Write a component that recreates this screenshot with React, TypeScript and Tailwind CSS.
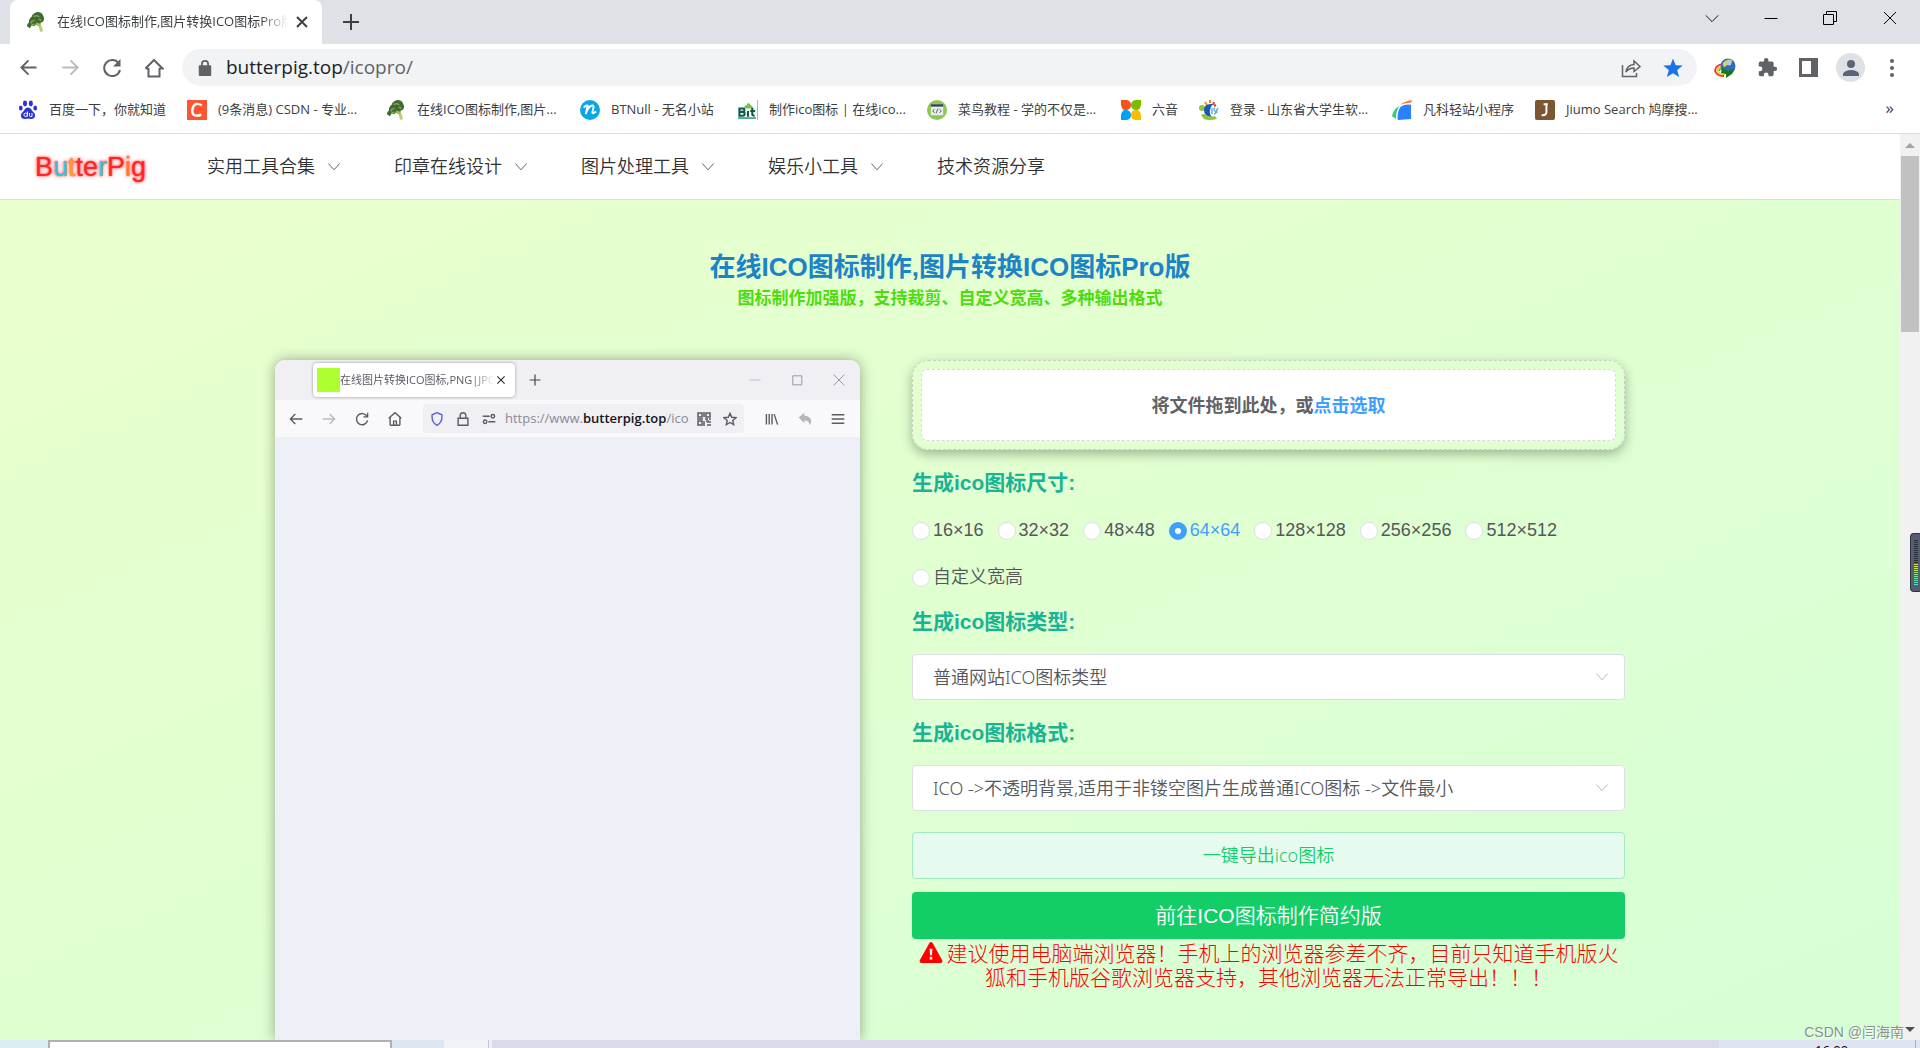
import type { ReactNode } from "react";
import clsx from "clsx";

const Broccoli = () => (
  <svg viewBox="0 0 21 21" className="size-5 shrink-0">
    <path d="M13 9l3 5 2 6-3 1-2-6-4-3z" fill="#b9cf7a" />
    <path d="M8 13l5-3 3 2-2 3-3-1z" fill="#9dbb5c" />
    <path d="M1 15q0-3 2-4 0-4 3-6 1-4 6-5 5 0 6 4 2 3 0 6l-4 2-3-1-2 4-3-1-2 3z" fill="#3f6b2c" />
    <path d="M5 12q1-3 4-3m-1-4q3-2 6 0m-8 9q1-1 3-1m4-5q2-1 3 1" stroke="#7da552" strokeWidth="1.6" fill="none" />
  </svg>
);

const Baidu = () => (
  <svg viewBox="0 0 20 20" className="size-5 shrink-0" fill="#2a32d8">
    <ellipse cx="7" cy="3.4" rx="2" ry="2.8" />
    <ellipse cx="12.8" cy="3.4" rx="2" ry="2.8" />
    <ellipse cx="2.8" cy="8" rx="1.9" ry="2.5" />
    <ellipse cx="17.2" cy="8" rx="1.9" ry="2.5" />
    <path d="M10 7.5c3 0 3.5 3 5.5 4.7 3 2.6 1.5 7-2 6.8-2.3-.3-4.7-.3-7 0-3.5.2-5-4.2-2-6.800C6.5 10.5 7 7.5 10 7.5z" />
    <circle cx="7.6" cy="14.8" r="1.700" fill="none" stroke="#fff" />
    <path d="M9.5 11.5v5M11.5 13v2.5q0 1 1 1h1.5V13" fill="none" stroke="#fff" />
  </svg>
);

const Csdn = () => (
  <svg viewBox="0 0 21 21" className="size-5 shrink-0">
    <path fill="#fc5531" d="M0 0h21v21H0z" />
    <path d="M15.5 5.5q-6.5-3.5-9 1.5-2 4.5 0 8 2.5 2.5 8.5.5" fill="none" stroke="#fff" strokeWidth="2.6" />
  </svg>
);

const BtNull = () => (
  <svg viewBox="0 0 21 21" className="size-5 shrink-0">
    <circle cx="10.5" cy="10.5" r="10.5" fill="#08a5e9" />
    <path d="M4 8q2-3 4-2-1 5-2 9 2-7 6-9 3-1 2 3l-1 4q0 2 4-1" fill="none" stroke="#fff" strokeWidth="2" />
  </svg>
);

const Bit = () => (
  <svg viewBox="0 0 21 21" className="size-5 shrink-0">
    <path d="M5 9l6-6 6 6z" fill="#7cc142" />
    <path d="M20.5 0v21" stroke="#8bc98b" />
    <path d="M1.5 9v7.5H5q2 0 2-2t-2-2q1.700 0 1.700-1.700T5 9zM1.5 12.5H5M10.5 11.5v6M15 8.5V15q0 1.5 2.5 1.5M12.800 11.5H18" stroke="#0b5c4c" strokeWidth="2.2" fill="none" />
    <path d="M0 18h19v2H0z" fill="#5aa394" />
  </svg>
);

const Runoob = () => (
  <svg viewBox="0 0 21 21" className="size-5 shrink-0">
    <circle cx="10.5" cy="10.5" r="10.5" fill="#8cc751" />
    <path d="M4 5h13v11H4z" fill="#e9eeee" />
    <path d="M4 4.5h13V7H4z" fill="#34495e" />
    <path d="M8 9.5l-2 2 2 2m5-4l2 2-2 2m-1.500-4.5l-2 5" stroke="#555" fill="none" />
  </svg>
);

const SixTone = () => (
  <svg viewBox="0 0 20 20" className="size-5 shrink-0">
    <path d="M0 0h6q4 1 4 5t-4 5H3Q0 8 0 5z" fill="#f65314" />
    <path d="M20 0h-6q-4 1-4 5t4 5h3q3-2 3-5z" fill="#7cbb00" />
    <path d="M0 20h6q4-1 4-5t-4-5H3Q0 12 0 15z" fill="#00a1f1" />
    <path d="M20 20h-6q-4-1-4-5t4-5h3q3 2 3 5z" fill="#ffbb00" />
  </svg>
);

const Shandong = () => (
  <svg viewBox="0 0 20 20" className="size-5 shrink-0">
    <path d="M6 2l2 3M11 0v3" stroke="#f08a24" strokeWidth="2" />
    <path d="M15 2l-1 3m3 0l-2 1" stroke="#e33" strokeWidth="2" />
    <circle cx="3" cy="8" r="3" fill="#8cc63f" />
    <path d="M14 4Q5 3 5 10t8 7q-3-3-2-7t3-6z" fill="#1258b5" />
    <path d="M13 8v6m3-6q-2 1 0 3t-1 3m4-6q-2 2-1 5" stroke="#5fb0e6" strokeWidth="1.5" fill="none" />
    <path d="M2 15q3-2 5 0 5 3 9 1l2 3q-8 2-13 0z" fill="#8cc63f" />
  </svg>
);

const Fanke = () => (
  <svg viewBox="0 0 21 21" className="size-5 shrink-0">
    <path d="M9 5Q13 1 21 0l-1 3q-6 0-11 2z" fill="#ff7a3d" />
    <path d="M8 6Q4 12 4 20L0 17Q1 10 8 6z" fill="#2fd07c" />
    <path d="M9 7q5-3 11-2v15l-14 1Q5 13 9 7z" fill="#2b80ff" />
  </svg>
);

const Jiumo = () => (
  <svg viewBox="0 0 21 21" className="size-5 shrink-0">
    <rect width="21" height="21" rx="2" fill="#7c5633" />
    <path d="M9 4.5h4.500M12 4.5v8q0 4-5 3.5" fill="none" stroke="#fff" strokeWidth="2" />
  </svg>
);

const bookmarks: { icon: ReactNode; label: string; width: string }[] = [
  { icon: <Baidu />, label: "百度一下，你就知道", width: "w-[169px]" },
  { icon: <Csdn />, label: "(9条消息) CSDN - 专业...", width: "w-[199px]" },
  { icon: <Broccoli />, label: "在线ICO图标制作,图片...", width: "w-[194px]" },
  { icon: <BtNull />, label: "BTNull - 无名小站", width: "w-[158px]" },
  { icon: <Bit />, label: "制作ico图标 | 在线ico...", width: "w-[189px]" },
  { icon: <Runoob />, label: "菜鸟教程 - 学的不仅是...", width: "w-[194px]" },
  { icon: <SixTone />, label: "六音", width: "w-[78px]" },
  { icon: <Shandong />, label: "登录 - 山东省大学生软...", width: "w-[193px]" },
  { icon: <Fanke />, label: "凡科轻站小程序", width: "w-[143px]" },
  { icon: <Jiumo />, label: "Jiumo Search 鸠摩搜...", width: "w-[180px]" },
];

const navItems = [
  { label: "实用工具合集", menu: true },
  { label: "印章在线设计", menu: true },
  { label: "图片处理工具", menu: true },
  { label: "娱乐小工具", menu: true },
  { label: "技术资源分享", menu: false },
];

const sizes = ["16×16", "32×32", "48×48", "64×64", "128×128", "256×256", "512×512", "自定义宽高"];

// stroke icon on a 20 unit grid
function Line({ d, className, width = 2 }: { d: string; className?: string; width?: number }) {
  return (
    <svg viewBox="0 0 20 20" className={clsx("shrink-0", className)} fill="none" stroke="currentColor" strokeWidth={width}>
      <path d={d} />
    </svg>
  );
}

function IconButton({ label, className, children }: { label: string; className?: string; children: ReactNode }) {
  return (
    <button type="button" aria-label={label} className={clsx("flex shrink-0 items-center justify-center", className)}>
      {children}
    </button>
  );
}

function TabStrip() {
  return (
    <div className="flex h-11 shrink-0 bg-[#dee1e6] pl-[10px]">
      <div className="flex w-[312px] items-center rounded-t-lg bg-white pr-[10px] pl-4">
        <Broccoli />
        <span className="ml-[11px] flex-1 overflow-hidden whitespace-nowrap text-[13px] [mask-image:linear-gradient(90deg,#000_88%,transparent)]">
          在线ICO图标制作,图片转换ICO图标Pro版
        </span>
        <IconButton label="关闭标签页" className="ml-1 size-5">
          <Line d="M5 5l10 10M15 5L5 15" className="size-5 text-[#3c4043]" />
        </IconButton>
      </div>
      <IconButton label="新标签页" className="ml-[15px] w-7">
        <Line d="M10 2v16M2 10h16" className="size-5 text-[#3c4043]" />
      </IconButton>
      <div className="ml-auto flex h-9 text-black">
        <IconButton label="搜索标签页" className="w-[59px]">
          <Line d="M3 7l7 7 7-7" width={1} className="size-[18px]" />
        </IconButton>
        <IconButton label="最小化" className="w-[59px]">
          <Line d="M3.5 10.5h13" width={1} className="size-5" />
        </IconButton>
        <IconButton label="还原" className="w-[59px]">
          <Line d="M3.5 6.5h10v10h-10zM6.5 6.5v-3h10v10h-3" width={1} className="size-5" />
        </IconButton>
        <IconButton label="关闭" className="w-[61px]">
          <Line d="M4 4l12 12M16 4L4 16" width={1} className="size-5" />
        </IconButton>
      </div>
    </div>
  );
}

function Toolbar() {
  return (
    <div className="flex h-[47px] shrink-0 items-center bg-white pl-[7px] text-[#5f6368]">
      <IconButton label="后退" className="w-[42px]">
        <Line d="M18.5 10H2.500M10 2.5L2.5 10l7.5 7.5" className="size-[19px]" />
      </IconButton>
      <IconButton label="前进" className="w-[42px] text-[#babcbe]">
        <Line d="M1.5 10h16M10 2.5l7.5 7.5-7.5 7.5" className="size-[19px]" />
      </IconButton>
      <IconButton label="重新加载" className="w-[42px]">
        <svg viewBox="0 0 20 20" className="size-5">
          <path d="M16.800 5.500A8 8 0 1 0 18 12" fill="none" stroke="currentColor" strokeWidth="2" />
          <path d="M18.5 1v7.500H11z" fill="currentColor" />
        </svg>
      </IconButton>
      <IconButton label="主页" className="w-[41px]">
        <Line d="M4.5 10v8.500h11V10M1.5 10.5L10 2l8.500 8.500h-3M4.5 10.500h-3" className="size-5" />
      </IconButton>
      <div className="ml-2 flex h-[37px] flex-1 items-center rounded-full bg-[#f1f3f4] pr-[3px] pl-4">
        <svg viewBox="0 0 14 18" className="h-[16px] w-3.5" fill="currentColor">
          <path d="M1 6h12q1 0 1 1v10q0 1-1 1H1q-1 0-1-1V7q0-1 1-1z" />
          <path d="M3.500 7V4.500a3.500 3.500 0 0 1 7 0V7" fill="none" stroke="currentColor" strokeWidth="2" />
        </svg>
        <div className="ml-[14px] flex-1 text-[19px] text-[#202124]">
          butterpig.top<span className="text-[#5f6368]">/icopro/</span>
        </div>
        <IconButton label="分享" className="w-[42px]">
          <Line d="M1.5 7v11.500h14V15M5 14q1-7 8-7.500V3l6 5.500-6 5v-3.500q-5 0-8 4z" width={1.5} className="size-5" />
        </IconButton>
        <IconButton label="收藏" className="w-[42px] text-[#1a73e8]">
          <svg viewBox="0 0 20 20" className="size-5" fill="currentColor">
            <path d="M10 .5l2.600 6.700 7.200.4-5.600 4.500 1.900 7L10 15.200l-6.100 3.900 1.900-7L.2 7.600l7.200-.4z" />
          </svg>
        </IconButton>
      </div>
      <div className="ml-[7px] flex items-center pr-2">
        <IconButton label="IDM" className="w-[42px]">
          <svg viewBox="0 0 22 20" className="size-[22px]">
            <path d="M8 6Q1 8 1 13q2 5 9 5" fill="none" stroke="#e8322a" strokeWidth="1.800" />
            <path d="M8 8Q3 10 3 13q3 4 8 3" fill="none" stroke="#f5d21f" strokeWidth="1.800" />
            <path d="M9 10q-4 1-4 3" fill="none" stroke="#4bbf3a" strokeWidth="1.800" />
            <circle cx="14" cy="8" r="7.500" fill="#3568b8" />
            <path d="M9 5q4-5 9-3 0 4-4 4l-3 3q-3-1-2-4z" fill="#d9d257" />
            <circle cx="15" cy="5" r="2.500" fill="#a9cdf0" />
            <path d="M8 10l6 3 7-2-3 5-6 4v-4l-5-1z" fill="#117a1b" />
          </svg>
        </IconButton>
        <IconButton label="扩展程序" className="w-[42px]">
          <svg viewBox="0 0 24 24" className="size-[21px]" fill="currentColor">
            <path d="M20.500 11H19V7a2 2 0 0 0-2-2h-4V3.500a2.500 2.500 0 0 0-5 0V5H4a2 2 0 0 0-2 2v3.800h1.500a2.700 2.700 0 0 1 0 5.400H2V20a2 2 0 0 0 2 2h3.800v-1.500a2.700 2.700 0 0 1 5.400 0V22H17a2 2 0 0 0 2-2v-4h1.500a2.500 2.500 0 0 0 0-5z" />
          </svg>
        </IconButton>
        <IconButton label="侧边栏" className="w-[41px]">
          <svg viewBox="0 0 19 19" className="size-[19px]">
            <path d="M0 0h19v19H0z" fill="currentColor" />
            <path d="M3 3h9v13H3z" fill="#fff" />
          </svg>
        </IconButton>
        <IconButton label="用户" className="mx-[7px] size-[29px] rounded-full bg-[#dee1e6] text-[#5c6577]">
          <svg viewBox="0 0 16 16" className="size-4" fill="currentColor">
            <circle cx="8" cy="4" r="4" />
            <path d="M0 16v-2.500Q2 10 8 10t8 3.500V16z" />
          </svg>
        </IconButton>
        <IconButton label="菜单" className="w-[40px]">
          <svg viewBox="0 0 4 18" className="h-[18px] w-1" fill="currentColor">
            <circle cx="2" cy="2" r="2" />
            <circle cx="2" cy="9" r="2" />
            <circle cx="2" cy="16" r="2" />
          </svg>
        </IconButton>
      </div>
    </div>
  );
}

function BookmarkBar() {
  return (
    <div className="flex h-[43px] shrink-0 items-center border-b border-[#dadce0] bg-white pr-[26px] pb-1 pl-[18px] text-[13px] text-[#3c4043]">
      {bookmarks.map((b) => (
        <a key={b.label} href="#" className={clsx("flex shrink-0 items-center gap-[11px] whitespace-nowrap", b.width)}>
          {b.icon}
          {b.label}
        </a>
      ))}
      <button type="button" className="ml-auto pb-1 text-[17px]" aria-label="更多书签">
        »
      </button>
    </div>
  );
}

function SiteHeader() {
  return (
    <header className="flex h-[66px] items-center border-b border-[#dcdfe6] bg-white pl-[35px] text-[18px] font-[350] text-[#303133]">
      <a
        href="#"
        className="w-[172px] font-['Liberation_Sans'] text-[27px] leading-8 font-normal text-[#ff2626] [text-shadow:0_0_2px_#ff3b3b,0_0_4px_#ff8080]"
      >
        B<span className="text-[#2fc4e0]">u</span>
        <span className="text-[#ff9b2e]">t</span>te<span className="text-[#2fc4e0]">r</span>P
        <span className="text-[#ff7a2e]">i</span>g
      </a>
      <nav className="flex gap-[53px]">
        {navItems.map((item) => (
          <a key={item.label} href="#" className="flex items-center gap-3">
            {item.label}
            {item.menu && <Line d="M2 5l8 9 8-9" width={1.4} className="size-3.5 text-[#606266]" />}
          </a>
        ))}
      </nav>
    </header>
  );
}

function PreviewWindow() {
  return (
    <div className="flex w-[585px] shrink-0 flex-col overflow-hidden rounded-t-[10px] bg-[#edf0f6] shadow-[0_0_14px_rgba(0,0,0,0.35)]">
      <div className="flex h-10 shrink-0 items-center bg-[#f0eff4] pr-[15px] pl-[38px] text-[#5b5b66]">
        <div className="flex h-[34px] w-[202px] items-center rounded bg-white pr-2 pl-1 shadow-[0_0_3px_rgba(0,0,0,0.4)]">
          <span className="h-6 w-[23px] shrink-0 bg-[#adff2f]" />
          <span className="flex-1 overflow-hidden whitespace-nowrap text-[11px] [mask-image:linear-gradient(90deg,#000_85%,transparent)]">
            在线图片转换ICO图标,PNG|JPG转ICO
          </span>
          <Line d="M4 4l12 12M16 4L4 16" className="size-3 text-[#333]" />
        </div>
        <Line d="M10 1v18M1 10h18" width={2} className="ml-[14px] size-3 text-[#444]" />
        <div className="ml-auto flex gap-[30px] text-[#8f8f9d]">
          <Line d="M1 10h18" width={1.5} className="size-3 opacity-60" />
          <Line d="M3 3h15v15H3z" width={1.5} className="size-3" />
          <Line d="M1 1l18 18M19 1L1 19" width={1.5} className="size-3" />
        </div>
      </div>
      <div className="flex h-[37px] shrink-0 items-center bg-[#f9f9fb] pr-[15px] pl-[14px] text-[#5b5b66]">
        <div className="flex w-[134px] shrink-0 gap-[19px]">
          <Line d="M19 10H2M9 3l-7 7 7 7" className="size-3.5" />
          <Line d="M1 10h17M11 3l7 7-7 7" className="size-3.5 opacity-40" />
          <Line d="M17 6a8 8 0 1 0 1 6M18 1v6h-6" className="size-3.5" />
          <Line d="M3 8v10q0 1 1 1h12q1 0 1-1V8M1 9l9-8 9 8M8 19v-6h4v6" className="size-3.5" />
        </div>
        <div className="flex h-[29px] min-w-0 flex-1 items-center rounded bg-[#f0eff4] px-[7px]">
          <Line d="M10 1l7 3q1 11-7 15-8-4-7-15z" className="size-3.5 text-[#5a5fd8]" />
          <Line d="M3 9h14v10H3zM6 9V5a4 4 0 0 1 8 0v4" className="ml-3 size-3.5" />
          <Line d="M1 6h10m-2 8h10M13 6a2 2 0 1 0 5 0 2 2 0 1 0-5 0M2 14a2 2 0 1 0 5 0 2 2 0 1 0-5 0" className="ml-3 size-3.5" />
          <span className="ml-[9px] flex-1 whitespace-nowrap text-[13px] text-[#8a8a93]">
            https://www.<span className="font-semibold text-[#15141a]">butterpig.top</span>/ico
          </span>
          <svg viewBox="0 0 14 14" className="size-3.5 shrink-0" fill="none" stroke="currentColor" strokeWidth="1.5">
            <path d="M1 1h4v4H1zM9 1h4v4H9zM1 9h4v4H1zM7 0v5M0 7h6M8 7h3M12 7h2M7 9v5M9 9h2v2M13 9v2M10 13h4" />
          </svg>
          <Line d="M10 2l2.500 5.500 6 .6-4.500 4 1.300 6L10 15l-5.300 3.100 1.300-6-4.500-4 6-.6z" className="ml-3 size-3.5" />
        </div>
        <div className="ml-[21px] flex gap-[19px]">
          <Line d="M2 3v15M6 3v15M10 3v15M13 3l5 15" className="size-3.5" />
          <svg viewBox="0 0 20 20" className="size-3.5" fill="#b5b5bc">
            <path d="M1 8l8-7v4q10 1 10 9-1 4-3 5 1-7-7-7v4z" />
          </svg>
          <Line d="M1 4h18M1 10h18M1 16h18" className="size-3.5" />
        </div>
      </div>
    </div>
  );
}

function SelectBox({ id, value }: { id: string; value: string }) {
  return (
    <div className="relative">
      <select
        id={id}
        className="h-[46px] w-full appearance-none rounded border border-[#dcdfe6] bg-white px-5 font-['Noto_Sans','Noto_Sans_CJK_SC',sans-serif] text-[18px] font-[350] text-[#55575b]"
      >
        <option>{value}</option>
      </select>
      <Line d="M2 5l8 9 8-9" width={1.2} className="pointer-events-none absolute top-4 right-4 size-3.5 text-[#a8abb2]" />
    </div>
  );
}

function OptionsForm() {
  const label = "font-['Liberation_Sans','Noto_Sans_CJK_SC',sans-serif] text-[21px] leading-[26px] font-bold text-[#1ab394]";
  return (
    <form className="flex w-[713px] shrink-0 flex-col">
      <div className="rounded-2xl border border-dashed border-[#c8cdc8] p-2 shadow-[0_4px_12px_rgba(0,0,0,0.3)]">
        <label className="flex h-[72px] cursor-pointer items-center justify-center rounded-md border border-dashed border-[#d9d9d9] bg-white text-[18px] font-bold text-[#606266]">
          将文件拖到此处，或<span className="text-[#409eff]">点击选取</span>
          <input type="file" className="sr-only" />
        </label>
      </div>
      <fieldset className="mt-5">
        <legend className={label}>生成ico图标尺寸:</legend>
        <div className="mt-[11px] flex flex-wrap gap-x-[14px] font-['Liberation_Sans','Noto_Sans_CJK_SC',sans-serif] text-[18px] text-[#55575b]">
          {sizes.map((s) => (
            <label key={s} className="flex h-[47px] items-center gap-[3px] font-[350] has-checked:text-[#409eff]">
              <input
                type="radio"
                name="size"
                defaultChecked={s === "64×64"}
                className="size-[18px] appearance-none rounded-full border border-[#dcdfe6] bg-white checked:border-[6px] checked:border-[#409eff]"
              />
              {s}
            </label>
          ))}
        </div>
      </fieldset>
      <label htmlFor="type" className={clsx(label, "mt-2 mb-[19px]")}>
        生成ico图标类型:
      </label>
      <SelectBox id="type" value="普通网站ICO图标类型" />
      <label htmlFor="format" className={clsx(label, "mt-5 mb-[19px]")}>
        生成ico图标格式:
      </label>
      <SelectBox id="format" value="ICO ->不透明背景,适用于非镂空图片生成普通ICO图标 ->文件最小" />
      <button
        type="button"
        className="mt-[21px] h-[47px] rounded border border-[#a1ebc2] bg-[#e7faf0] font-['Noto_Sans','Noto_Sans_CJK_SC',sans-serif] text-[18px] font-[350] text-[#13ce66]"
      >
        一键导出ico图标
      </button>
      <button
        type="button"
        className="mt-[13px] h-[47px] rounded bg-[#13ce66] font-['Liberation_Sans','Noto_Sans_CJK_SC',sans-serif] text-[21px] font-[350] text-white"
      >
        前往ICO图标制作简约版
      </button>
      <p className="mt-[2px] text-center text-[21px] leading-6 font-light text-[#ff0000]">
        <svg viewBox="0 0 24 22" className="mr-1 inline h-[21px] w-6 align-[-2px]">
          <path d="M10.300 1q1.700-2 3.400 0l10 18q.8 2.500-1.700 3H2q-2.500-.5-1.700-3z" fill="#f00" />
          <path d="M10.500 7h3l-.5 7h-2zM10.700 15.500h2.600v2.800h-2.600z" fill="#fff" />
        </svg>
        建议使用电脑端浏览器！手机上的浏览器参差不齐，目前只知道手机版火狐和手机版谷歌浏览器支持，其他浏览器无法正常导出！！！
      </p>
    </form>
  );
}

function Scrollbar() {
  return (
    <div className="flex w-5 shrink-0 flex-col items-center bg-[#f1f1f1]">
      <svg viewBox="0 0 20 22" className="h-[22px] w-5">
        <path d="M5 14l5-5 5 5z" fill="#a3a3a3" />
      </svg>
      <div className="h-[176px] w-[18px] bg-[#c1c1c1]" />
      <svg viewBox="0 0 20 20" className="mt-auto size-5">
        <path d="M5 7h10l-5 5z" fill="#505050" />
      </svg>
    </div>
  );
}

function LevelMeter() {
  return (
    <div className="absolute top-[533px] right-0 flex h-[59px] w-[10px] flex-col items-center justify-center gap-px rounded-l border border-r-0 border-[#30343f] bg-[#565d70]">
      {Array.from({ length: 23 }, (_, i) => (
        <span
          key={i}
          className={clsx("h-px w-1", i < 12 ? "bg-[#2b2f3a]" : i < 16 ? "bg-[#c6e04f]" : i < 20 ? "bg-[#7fe07f]" : "bg-[#4fe0c8]")}
        />
      ))}
    </div>
  );
}

function Taskbar() {
  return (
    <div className="flex h-2 shrink-0 overflow-hidden bg-[#dadbea]">
      <div className="w-12 bg-[#dceef4]" />
      <div className="w-[344px] border-2 border-b-0 border-[#b0b0b0] bg-white" />
      <div className="w-[52px] bg-[#dde6f1]" />
      <div className="w-11 bg-[#f1f3f8]" />
      <div className="w-1 border-l border-[#c3c4d4] bg-[#eeeef5]" />
      <div className="ml-auto flex items-start bg-[#dfe4f2] pl-24">
        <span className="w-[100px] pt-[2px] text-[13px] leading-4 text-black">16:00</span>
        <span className="h-2 w-[5px] border-l border-[#a9adbd]" />
      </div>
    </div>
  );
}

export default function App() {
  return (
    <div className="relative flex h-screen flex-col overflow-hidden font-['Open_Sans','Noto_Sans_CJK_SC',sans-serif] text-[#3c4043]">
      <TabStrip />
      <Toolbar />
      <BookmarkBar />
      <div className="flex min-h-0 flex-1">
        <div className="flex min-w-0 flex-1 flex-col overflow-hidden">
          <SiteHeader />
          <main className="flex min-h-0 flex-1 flex-col bg-linear-to-br from-[#eaffcd] to-[#d6ffd6] pt-[49px] font-['Liberation_Sans','Noto_Sans_CJK_SC',sans-serif]">
            <h1 className="text-center text-[26px] leading-9 font-bold text-[#1c84c6]">
              在线ICO图标制作,图片转换ICO图标Pro版
            </h1>
            <h2 className="text-center text-[17px] leading-7 font-bold text-[#4edc10]">
              图标制作加强版，支持裁剪、自定义宽高、多种输出格式
            </h2>
            <div className="mt-[47px] flex min-h-0 flex-1 justify-center gap-[52px] font-['Open_Sans','Noto_Sans_CJK_SC',sans-serif]">
              <PreviewWindow />
              <OptionsForm />
            </div>
          </main>
        </div>
        <Scrollbar />
      </div>
      <Taskbar />
      <LevelMeter />
      <div className="absolute right-4 bottom-2 font-['Liberation_Sans','Noto_Sans_CJK_SC',sans-serif] text-[14px] leading-4 text-[#8a918a] [text-shadow:1px_1px_0_#fff]">
        CSDN @闫海南
      </div>
    </div>
  );
}
